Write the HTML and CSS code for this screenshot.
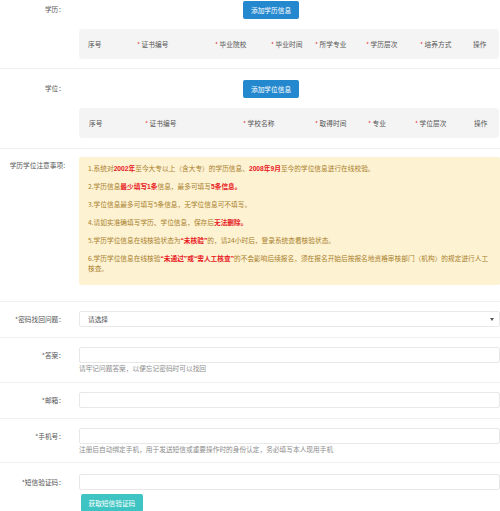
FILE: index.html
```html
<!DOCTYPE html>
<html lang="zh-CN">
<head>
<meta charset="utf-8">
<link rel="stylesheet" href="styles.css">
</head>
<body>
<div class="form">
  <div class="row row-edu">
    <div class="label">学历：</div>
    <div class="content">
      <div class="btn-wrap"><span class="btn btn-blue">添加学历信息</span></div>
      <div class="thead thead-edu">
        <span>序号</span>
        <span><i>*</i> 证书编号</span>
        <span><i>*</i> 毕业院校</span>
        <span><i>*</i> 毕业时间</span>
        <span><i>*</i> 所学专业</span>
        <span><i>*</i> 学历层次</span>
        <span><i>*</i> 培养方式</span>
        <span>操作</span>
      </div>
    </div>
  </div>
  <div class="row row-deg">
    <div class="label">学位：</div>
    <div class="content">
      <div class="btn-wrap"><span class="btn btn-blue">添加学位信息</span></div>
      <div class="thead thead-deg">
        <span>序号</span>
        <span><i>*</i> 证书编号</span>
        <span><i>*</i> 学校名称</span>
        <span><i>*</i> 取得时间</span>
        <span><i>*</i> 专业</span>
        <span><i>*</i> 学位层次</span>
        <span>操作</span>
      </div>
    </div>
  </div>
  <div class="row row-notice">
    <div class="label label-wide">学历学位注意事项:</div>
    <div class="content">
      <div class="notice">
        <p>1.系统对<b>2002年</b>至今大专以上（含大专）的学历信息、<b>2008年9月</b>至今的学位信息进行在线校验。</p>
        <p>2.学历信息<b>最少填写1条</b>信息，最多可填写<b>5条信息。</b></p>
        <p>3.学位信息最多可填写5条信息，无学位信息可不填写。</p>
        <p>4.请如实准确填写学历、学位信息，保存后<b>无法删除。</b></p>
        <p>5.学历学位信息在线核验状态为<b>“未核验”</b>的，请24小时后，登录系统查看核验状态。</p>
        <p>6.学历学位信息在线核验<b>“未通过”或“需人工核查”</b>的不会影响后续报名，须在报名开始后按报名地资格审核部门（机构）的规定进行人工核查。</p>
      </div>
    </div>
  </div>
  <div class="row row-field">
    <div class="label">*密码找回问题：</div>
    <div class="content">
      <div class="select"><span>请选择</span><span class="caret"></span></div>
    </div>
  </div>
  <div class="row row-field row-help">
    <div class="label">*答案：</div>
    <div class="content">
      <div class="input"></div>
      <div class="help">请牢记问题答案，以便忘记密码时可以找回</div>
    </div>
  </div>
  <div class="row row-field">
    <div class="label">*邮箱：</div>
    <div class="content">
      <div class="input"></div>
    </div>
  </div>
  <div class="row row-field row-help row-phone">
    <div class="label">*手机号：</div>
    <div class="content">
      <div class="input"></div>
      <div class="help">注册后自动绑定手机，用于发送短信或重要操作时的身份认定，务必填写本人现用手机</div>
    </div>
  </div>
  <div class="row row-field row-last">
    <div class="label">*短信验证码：</div>
    <div class="content">
      <div class="input"></div>
      <span class="btn btn-teal">获取短信验证码</span>
    </div>
  </div>
</div>
</body>
</html>
```
FILE: styles.css
```css
html, body {
  margin: 0;
  padding: 0;
  background: #ffffff;
}
body {
  font-family: "Noto Sans CJK SC", "Noto Sans", sans-serif;
  font-size: 6.7px;
  color: #555555;
  width: 500px;
  overflow: hidden;
}
.form {
  display: flex;
  flex-direction: column;
}
.row {
  display: flex;
  border-bottom: 1px solid #efefef;
}
.label {
  flex: none;
  width: 65px;
  text-align: right;
  line-height: 16px;
  color: #555555;
  white-space: nowrap;
}
.content {
  flex: 1;
  margin-left: 14px;
  min-width: 0;
}
.row-edu { padding: 1px 0 9px; }
.row-deg { padding: 11px 0 10px; }
.row-notice { padding: 8px 0 16px; }
.row-field { padding: 9px 0 10px; }
.row-help { padding-bottom: 9px; }
.row-phone { padding-bottom: 8px; }
.row-last { padding: 11px 0 0; border-bottom: none; }

.btn-wrap {
  padding-left: 164px;
  display: flex;
}
.btn {
  display: inline-block;
  height: 18px;
  line-height: 18px;
  padding: 0 8px;
  color: #ffffff;
  border-radius: 2px;
  white-space: nowrap;
}
.btn-blue { background: #2488cf; }
.btn-teal {
  background: #3ec5c3;
  margin: 4px 0 0 2px;
  padding: 0 7.5px;
}

.thead {
  margin: 10px 1px 0 0;
  height: 30px;
  background: #f4f4f4;
  border-radius: 4px;
  display: grid;
  align-items: center;
  padding-left: 9px;
  color: #555555;
  white-space: nowrap;
}
.thead i {
  font-style: normal;
  color: #e6393c;
}
.thead-edu {
  grid-template-columns: 49px 78px 56px 44px 51px 54px 53px 1fr;
}
.thead-deg {
  padding-left: 10px;
  grid-template-columns: 56px 98px 72px 53px 47px 59px 1fr;
}

.notice {
  background: #fdf2d2;
  border-radius: 2px;
  padding: 6px 9px 12px;
  color: #a8802c;
}
.notice p {
  margin: 0 0 8px;
  line-height: 10px;
}
.notice p:last-child { margin-bottom: 0; }
.notice b {
  font-family: "Liberation Sans", "Noto Sans CJK SC", sans-serif;
  line-height: 0;
  color: #e8181e;
  font-weight: bold;
}

.select, .input {
  height: 14px;
  border: 1px solid #e8e8e8;
  border-radius: 2px;
  background: #ffffff;
}
.select {
  display: flex;
  align-items: center;
  justify-content: space-between;
  padding: 0 5px 0 8px;
  color: #555555;
}
.caret {
  width: 0;
  height: 0;
  border-left: 2px solid transparent;
  border-right: 2px solid transparent;
  border-top: 3px solid #555555;
}
.help {
  line-height: 10px;
  color: #8c8c8c;
  white-space: nowrap;
}
```
